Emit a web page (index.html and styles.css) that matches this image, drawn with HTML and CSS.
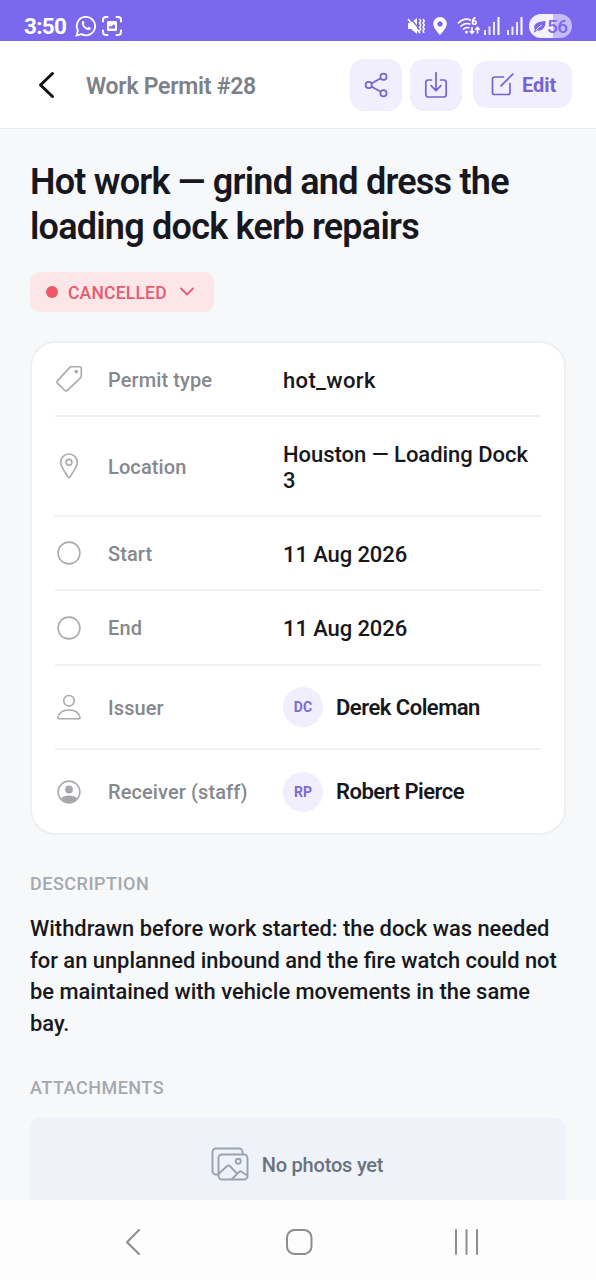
FILE: index.html
```html
<!DOCTYPE html>
<html lang="en">
<head>
<meta charset="utf-8">
<title>Work Permit #28</title>
<link rel="stylesheet" href="styles.css">
</head>
<body>
<div class="screen">
  <div class="statusbar">
    <span class="clock">3:50</span>
    <svg class="ic-wa" width="22" height="22" viewBox="0 0 22 22" fill="none" stroke="#fff"><path d="M1.6 20.4l1.3-4.9a9.2 9.2 0 1 1 3.6 3.6z" stroke-width="1.8"/><path d="M7.2 6.2c.5-.5 1.2-.5 1.5.2l.7 1.6c.1.4-.7 1.1-.7 1.4.8 1.6 2 2.700 3.700 3.400.5 0 .900-1.100 1.400-1l1.700.9c.8.5.1 1.900-.9 2.300-3.800.8-9.200-4.600-7.400-8.800z" fill="#fff" stroke="none"/></svg>
    <svg class="ic-shot" width="20" height="20" viewBox="0 0 20 20" fill="none" stroke="#fff" stroke-width="2" stroke-linecap="round"><path d="M1 5.500V4a3 3 0 0 1 3-3h1.500M14.500 1H16a3 3 0 0 1 3 3v1.500M19 14.500V16a3 3 0 0 1-3 3h-1.500M5.500 19H4a3 3 0 0 1-3-3v-1.500"/><path fill-rule="evenodd" d="M6.500 5h7A1.500 1.500 0 0 1 15 6.500v7a1.500 1.500 0 0 1-1.500 1.500h-7A1.500 1.500 0 0 1 5 13.500v-7A1.500 1.500 0 0 1 6.500 5zM7 12.500h6V9.500l-1.500-1.200-2 2.400-1.200-1L7 11z" fill="#fff" stroke="none"/></svg>
    <div class="status-right">
      <svg width="18" height="18" viewBox="0 0 18 18" fill="none" stroke="#fff"><path d="M1 6h3l6-5v16l-6-5H1z" fill="#fff" stroke="none"/><path d="M2 0l14 16" stroke="#7c68ee" stroke-width="1.300"/><path d="M1 2l12 14" stroke-width="1.600"/><path d="M12.500 2l1.300 2-1.300 2 1.300 2-1.300 2 1.300 2-1.300 2M16 2l1.300 2L16 6l1.300 2L16 10l1.300 2L16 14l1 2" stroke-width="1.500"/></svg>
      <svg class="ic-pin" width="14" height="18" viewBox="0 0 14 18"><path fill="#fff" fill-rule="evenodd" d="M7 0a6.800 6.800 0 0 1 6.800 6.800C13.800 11.500 7 18 7 18S.2 11.500.2 6.800A6.800 6.800 0 0 1 7 0zm0 4.300a2.600 2.600 0 1 0 0 5.200 2.600 2.600 0 0 0 0-5.200z"/></svg>
      <svg class="ic-wifi" width="24" height="20" viewBox="0 0 24 20" fill="none" stroke="#fff" stroke-width="1.600"><path d="M1 7.500Q7 1 14 4.200M3.500 10.500Q8 6 13.500 8.200M6 13.500Q9 10.600 12.500 12"/><circle cx="9.500" cy="16" r="1.500" fill="#fff" stroke="none"/><path d="M18.500 1.500Q15.600 2.500 15.600 6.300"/><circle cx="17.300" cy="6.500" r="1.800"/><path d="M15 11v6M12.800 15l2.200 2.300 2.200-2.300M20.500 17.500v-6M18.300 13.700l2.200-2.300 2.200 2.300"/></svg>
      <svg class="ic-sig" width="16" height="18" viewBox="0 0 16 18" fill="#fff"><path opacity=".85" d="M0 13h2v5H0zM4.500 9.500h2V18h-2zM9 5h2v13H9z"/><path d="M13.500 0h2v18h-2z"/></svg>
      <svg class="ic-sig2" width="16" height="18" viewBox="0 0 16 18" fill="#fff"><path opacity=".85" d="M0 13h2v5H0zM4.500 9.500h2V18h-2zM9 5h2v13H9z"/><path d="M13.500 0h2v18h-2z"/></svg>
      <div class="battery"><svg width="13" height="13" viewBox="0 0 13 13"><path fill="#7c68ee" d="M1.800 10C-.5 4 4 1.700 12.500 1c.5 6-3 10.500-8.800 9.600L2 12.500.8 11.500z"/><path d="M3 10.500Q5.500 6.500 9 5" fill="none" stroke="#f0eefe" stroke-width="1"/></svg><span>56</span></div>
    </div>
  </div>

  <header class="appbar">
    <svg class="back" width="18" height="28" viewBox="0 0 18 28" fill="none" stroke="#111" stroke-width="3" stroke-linecap="round" stroke-linejoin="round"><path d="M15.500 2.500L3.500 14l12 11.500"/></svg>
    <h1 class="bar-title">Work Permit #28</h1>
    <button class="sq" aria-label="Share"><svg width="24" height="26" viewBox="0 0 24 26" fill="none" stroke="#7662d5" stroke-width="1.700"><circle cx="4.700" cy="13" r="3.100"/><circle cx="19.500" cy="4.700" r="3.100"/><circle cx="19.500" cy="21.300" r="3.100"/><path d="M7.400 11.500l9.400-5.300M7.400 14.500l9.400 5.300"/></svg></button>
    <button class="sq dl" aria-label="Download"><svg width="24" height="28" viewBox="0 0 24 28" fill="none" stroke="#7662d5" stroke-width="1.700" stroke-linecap="round" stroke-linejoin="round"><path d="M7.500 9H4.200A2.400 2.400 0 0 0 1.800 11.400v12.200A2.400 2.400 0 0 0 4.200 26h15.600a2.400 2.400 0 0 0 2.400-2.400V11.400A2.400 2.400 0 0 0 19.800 9h-3.300M12 1.500v18M7 14.700l5 4.900 5-4.900"/></svg></button>
    <button class="edit"><svg width="23" height="23" viewBox="0 0 23 23" fill="none" stroke="#7662d5" stroke-width="1.700" stroke-linecap="round" stroke-linejoin="round"><path d="M12.500 4H3.500A2 2 0 0 0 1.500 6v13.500a2 2 0 0 0 2 2h13.500a2 2 0 0 0 2-2V10.500M10 12.800L21.800 1.200"/></svg><span>Edit</span></button>
  </header>

  <main class="content">
    <h2 class="title">Hot work — grind and dress the<br>loading dock kerb repairs</h2>
    <div class="badge"><i></i><span>CANCELLED</span><svg width="16" height="10" viewBox="0 0 16 10" fill="none" stroke="#e65c78" stroke-width="1.800" stroke-linecap="round" stroke-linejoin="round"><path d="M2 1.500l6 6 6-6"/></svg></div>

    <section class="card">
      <div class="row r1">
        <svg width="28" height="28" viewBox="0 0 28 28" fill="none" stroke="#a9abae" stroke-width="1.600" stroke-linejoin="round"><path d="M16.300 1.800h8a2 2 0 0 1 2 2v7.300a2.500 2.500 0 0 1-.8 1.800L12.400 25.300a2 2 0 0 1-2.800 0l-7-6.900a2 2 0 0 1 0-2.800L14.600 2.600a2.500 2.500 0 0 1 1.700-.8z"/><circle cx="21.200" cy="6.600" r="1.100" fill="#a9abae"/></svg>
        <span class="label">Permit type</span><span class="value code">hot_work</span></div>
      <div class="row r2">
        <svg width="28" height="28" viewBox="0 0 28 28" fill="none" stroke="#a9abae" stroke-width="1.600" stroke-linejoin="round"><path d="M14 2a8.300 8.300 0 0 1 8.300 8.300c0 5.300-5.800 11.600-7.500 14.900q-.8 1-1.600 0C11.500 21.900 5.700 15.600 5.700 10.300A8.300 8.300 0 0 1 14 2z"/><circle cx="14" cy="10.300" r="2.900"/></svg>
        <span class="label">Location</span><span class="value">Houston — Loading Dock<br>3</span></div>
      <div class="row r3">
        <svg width="28" height="28" viewBox="0 0 28 28" fill="none" stroke="#a9abae" stroke-width="1.600"><circle cx="14" cy="14" r="10.900"/></svg>
        <span class="label">Start</span><span class="value">11 Aug 2026</span></div>
      <div class="row r4">
        <svg width="28" height="28" viewBox="0 0 28 28" fill="none" stroke="#a9abae" stroke-width="1.600"><circle cx="14" cy="14" r="10.900"/></svg>
        <span class="label">End</span><span class="value">11 Aug 2026</span></div>
      <div class="row r5">
        <svg width="28" height="28" viewBox="0 0 28 28" fill="none" stroke="#a9abae" stroke-width="1.600" stroke-linejoin="round"><circle cx="14" cy="7.800" r="5.300"/><path d="M3.600 25.800h20.800q.8 0 .6-1.200C24 19.500 19.500 17 14 17S4 19.500 3 24.600q-.2 1.200.6 1.200z"/></svg>
        <span class="label">Issuer</span><span class="avatar">DC</span><span class="name">Derek Coleman</span></div>
      <div class="row r6">
        <svg width="28" height="28" viewBox="0 0 28 28" fill="none"><circle cx="14" cy="14" r="10.900" stroke="#a9abae" stroke-width="1.600"/><circle cx="14" cy="11.500" r="3.900" fill="#a5a7aa"/><path fill="#a5a7aa" d="M6 20.400C7.500 18.500 10.500 17.600 14 17.600s6.500.9 8 2.800C20 23 17.300 24.400 14 24.400S8 23 6 20.400z"/></svg>
        <span class="label">Receiver (staff)</span><span class="avatar">RP</span><span class="name">Robert Pierce</span></div>
    </section>

    <h3 class="section s1">DESCRIPTION</h3>
    <p class="desc">Withdrawn before work started: the dock was needed<br>for an unplanned inbound and the fire watch could not<br>be maintained with vehicle movements in the same<br>bay.</p>
    <h3 class="section s2">ATTACHMENTS</h3>
    <div class="empty">
      <svg width="38" height="34" viewBox="0 0 38 34" fill="none" stroke="#98a3b2" stroke-width="1.900" stroke-linejoin="round" stroke-linecap="round"><path d="M6.500 27.500H5A3.500 3.500 0 0 1 1.500 24V5A3.500 3.500 0 0 1 5 1.500H28A3.500 3.500 0 0 1 31.500 5V7"/><rect x="7.500" y="7.500" width="29" height="25" rx="3.500"/><circle cx="27.300" cy="14.300" r="2.500"/><path d="M8 26.500l8.200-7.500q1.300-1.200 2.600 0l6.200 6.500M21 32l7-7q1.500-1.300 3 0l5.500 3.800"/></svg>
      <span>No photos yet</span>
    </div>
  </main>

  <nav class="navbar">
    <svg width="18" height="28" viewBox="0 0 18 28" fill="none" stroke="#8d8d8d" stroke-width="2" stroke-linecap="round" stroke-linejoin="round"><path d="M15 2L3 14.200 15 26"/></svg>
    <svg class="home" width="28" height="28" viewBox="0 0 28 28" fill="none" stroke="#8d8d8d" stroke-width="2"><rect x="2" y="2" width="24.500" height="24" rx="7.500"/></svg>
    <svg class="recents" width="26" height="28" viewBox="0 0 26 28" fill="none" stroke="#8d8d8d" stroke-width="2" stroke-linecap="round"><path d="M2 2v24M12.500 2v24M23 2v24"/></svg>
  </nav>
</div>
</body>
</html>
```
FILE: styles.css
```css
* { box-sizing: border-box; }
body { margin: 0; background: #f7f8fa; font-family: Roboto, "Liberation Sans", sans-serif; color: #17181c; }
h1, h2, h3, p { margin: 0; }
svg { display: block; flex: none; }
button { border: 0; padding: 0; font: inherit; }
.screen { width: 596px; height: 1280px; display: flex; flex-direction: column; overflow: hidden; white-space: nowrap; }

.statusbar { height: 41px; flex: none; background: #7c68ee; display: flex; align-items: center; padding: 11px 24px 0; color: #fff; }
.clock { font-size: 22.500px; font-weight: 700; line-height: 26px; width: 51px; letter-spacing: -.7px; }
.ic-shot { margin-left: 5px; }
.status-right { margin-left: auto; display: flex; align-items: center; }
.ic-pin { margin-left: 8px; }
.ic-wifi { margin-left: 10px; }
.ic-sig { margin-left: 3px; }
.ic-sig2 { margin-left: 7px; }
.battery { margin-left: 6px; width: 43px; height: 24px; border-radius: 12px; background: linear-gradient(90deg, #f3f1fe 56%, #c5bbf8 56%); color: #7c68ee; display: flex; align-items: center; gap: 1px; padding-left: 4px; font-size: 19px; font-weight: 500; letter-spacing: -.6px; }

.appbar { height: 88px; flex: none; background: #fff; border-bottom: 1px solid #e9ebed; display: flex; align-items: center; padding: 0 24px 0 37px; }
.bar-title { font-size: 23px; font-weight: 600; line-height: 28px; letter-spacing: -.25px; color: #7c8188; margin-left: 31px; margin-right: auto; padding-top: 4px; }
.sq { width: 52px; height: 52px; border-radius: 14px; background: #f1eefd; display: grid; place-items: center; }
.dl { margin-left: 8px; }
.edit { width: 99px; height: 47px; margin-left: 11px; border-radius: 14px; background: #f1eefd; color: #7662d5; font-size: 20px; font-weight: 700; display: flex; align-items: center; gap: 8px; padding-left: 18px; }

.content { flex: 1; min-height: 0; overflow: hidden; padding: 31px 30px 0; display: flex; flex-direction: column; align-items: stretch; }
.title { font-size: 36px; line-height: 45px; font-weight: 600; letter-spacing: -.77px; color: #17181f; flex: none; }
.badge { flex: none; align-self: flex-start; width: 184px; height: 40px; margin-top: 22px; border-radius: 10px; background: #fde6e8; color: #e65c70; display: flex; align-items: center; padding-left: 16px; font-size: 17.500px; font-weight: 500; letter-spacing: .2px; }
.badge span { padding-top: 1px; }
.badge i { width: 12px; height: 12px; border-radius: 50%; background: #f1556a; margin-right: 10px; }
.badge svg { margin-left: 12px; }

.card { margin-top: 29px; height: 494px; flex: none; background: #fff; border: 2px solid #eff0f2; border-radius: 26px; padding: 0 23px; }
.row { display: flex; align-items: center; border-bottom: 2px solid #f0f1f2; }
.r1 { height: 74px; }
.r2 { height: 100px; }
.r3 { height: 74px; }
.r4 { height: 75px; }
.r5 { height: 84px; }
.r6 { height: 85px; }
.label { width: 175px; margin-left: 25px; font-size: 20px; font-weight: 500; letter-spacing: .1px; color: #85888d; line-height: 26px; padding-top: 1px; }
.value { font-size: 22px; font-weight: 500; line-height: 26px; letter-spacing: -.03px; color: #17181c; padding-top: 3px; }
.code { letter-spacing: .35px; }
.r3 .value, .r4 .value { letter-spacing: -.1px; }
.avatar { width: 40px; height: 40px; border-radius: 50%; background: #f1eefd; color: #7d6ad8; font-size: 14px; font-weight: 700; display: grid; place-items: center; }
.name { margin-left: 13px; font-size: 22px; font-weight: 600; letter-spacing: -.5px; }

.section { flex: none; font-size: 18px; font-weight: 500; line-height: 20px; letter-spacing: .5px; color: #a5a8ae; }
.s1 { margin-top: 39px; }
.desc { flex: none; margin-top: 19px; font-size: 21.900px; font-weight: 500; line-height: 31.500px; }
.s2 { margin-top: 39px; }
.empty { flex: none; height: 110px; margin-top: 20px; background: #eff3f9; border-radius: 10px; display: flex; align-items: flex-start; justify-content: center; gap: 13px; padding: 29px 2px 0 0; color: #69727f; font-size: 20px; font-weight: 500; line-height: 36px; letter-spacing: -.2px; }

.navbar { height: 80px; flex: none; background: #fdfdfd; display: flex; align-items: center; padding: 3px 116px 0 124px; justify-content: space-between; }
.home { margin-left: 2px; }
```
